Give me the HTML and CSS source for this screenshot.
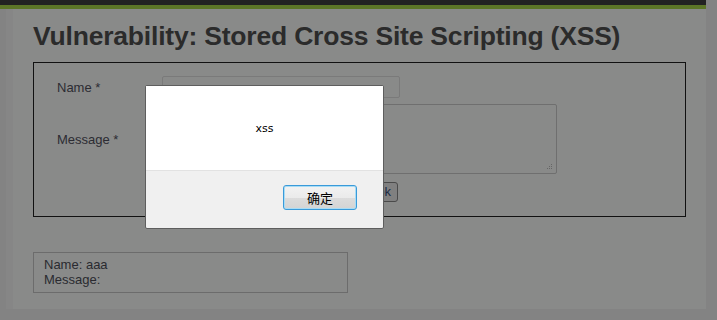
FILE: index.html
```html
<!DOCTYPE html>
<html lang="en">
<head>
    <meta charset="UTF-8">
    <title>Vulnerability: Stored Cross Site Scripting (XSS)</title>
    <link rel="stylesheet" href="styles.css">
</head>
<body>
    <div class="page">
        <div class="column">
            <div class="topbar"></div>
            <div class="greenbar"></div>
            <div class="layout">
                <div class="side"></div>
                <div class="main">
                    <h1>Vulnerability: Stored Cross Site Scripting (XSS)</h1>
                    <div class="form-box">
                        <div class="row">
                            <label class="label">Name *</label>
                            <div class="input"></div>
                        </div>
                        <div class="row">
                            <label class="label">Message *</label>
                            <div class="textarea">
                                <svg class="grip" width="6" height="6" viewBox="0 0 6 6">
                                    <rect x="4" y="0" width="1" height="1" fill="#666"/>
                                    <rect x="2" y="2" width="1" height="1" fill="#666"/>
                                    <rect x="4" y="2" width="1" height="1" fill="#666"/>
                                    <rect x="0" y="4" width="1" height="1" fill="#666"/>
                                    <rect x="2" y="4" width="1" height="1" fill="#666"/>
                                    <rect x="4" y="4" width="1" height="1" fill="#666"/>
                                </svg>
                            </div>
                        </div>
                        <div class="row">
                            <span class="label"></span>
                            <div class="submit">Sign Guestbook</div>
                        </div>
                    </div>
                    <div class="entry">
                        <div>Name: aaa</div>
                        <div>Message: </div>
                    </div>
                </div>
            </div>
        </div>
        <div class="scrollbar"></div>
    </div>

    <div class="alert">
        <div class="alert-body">xss</div>
        <div class="alert-foot">
            <button class="alert-btn">确定</button>
        </div>
    </div>
</body>
</html>
```
FILE: styles.css
```css
body {
    margin: 0;
    padding: 0;
    background-color: #838383;
    font-family: "Liberation Sans", Arial, sans-serif;
    overflow: hidden;
}
.page {
    display: flex;
    height: 320px;
}
.column {
    width: 706px;
    display: flex;
    flex-direction: column;
}
.scrollbar {
    width: 11px;
    background-color: #838383;
}
.topbar {
    height: 5px;
    background-color: #222222;
}
.greenbar {
    height: 4px;
    background-color: #5c7527;
}
.layout {
    display: flex;
    height: 300px;
}
.side {
    width: 6px;
    border-right: 7px solid #868686;
    background-color: #838383;
}
.main {
    flex: 1;
    background-color: #898a89;
    padding: 0 20px;
}
h1 {
    margin: 9px 0 0 0;
    height: 44px;
    font-size: 26.5px;
    line-height: 36px;
    color: #2b2b2b;
    letter-spacing: -0.2px;
}
.form-box {
    height: 140px;
    border: 1px solid #111111;
    padding: 13px 0 0 23px;
}
.row {
    display: flex;
    align-items: center;
    margin-bottom: 6px;
    font-size: 13px;
    color: #2c2c33;
}
.label {
    width: 105px;
}
.input {
    width: 236px;
    height: 20px;
    border: 1px solid #7a7a7a;
    border-radius: 2px;
}
.textarea {
    position: relative;
    width: 393px;
    height: 68px;
    border: 1px solid #6f6f6f;
    border-radius: 2px;
}
.grip {
    position: absolute;
    right: 3px;
    bottom: 3px;
}
.submit {
    margin-top: 2px;
    width: 236px;
    height: 20px;
    line-height: 18px;
    text-align: right;
    font-size: 13px;
    color: #1c2b44;
    border: 1px solid #4a4a4a;
    border-radius: 3px;
    background-color: #808080;
    padding-right: 6px;
    box-sizing: border-box;
}
.entry {
    margin-top: 35px;
    width: 303px;
    height: 32px;
    border: 1px solid #6c6c6c;
    padding: 4px 0 3px 10px;
    font-size: 13px;
    line-height: 15px;
    color: #2a2a30;
}
.alert {
    position: absolute;
    left: 145px;
    top: 85px;
    width: 237px;
    height: 142px;
    border: 1px solid #5e5e5e;
    border-radius: 2px;
    background-color: #f0f0f0;
    font-family: "DejaVu Sans", "Noto Sans CJK SC", sans-serif;
}
.alert-body {
    height: 84px;
    background-color: #ffffff;
    border-bottom: 1px solid #e2e2e2;
    text-align: center;
    line-height: 86px;
    font-size: 11px;
    color: #000000;
}
.alert-foot {
    display: flex;
    justify-content: flex-end;
    padding: 14px 26px 0 0;
}
.alert-btn {
    width: 74px;
    height: 25px;
    border: 1px solid #3a9ad9;
    border-radius: 3px;
    box-shadow: inset 0 0 0 1px #a8dcf5;
    background: linear-gradient(#f2f2f2 0%, #ebebeb 50%, #dcdcdc 51%, #d4d4d4 100%);
    font-family: "Noto Sans CJK SC", sans-serif;
    font-size: 13px;
    color: #000000;
    padding: 0;
}
```
